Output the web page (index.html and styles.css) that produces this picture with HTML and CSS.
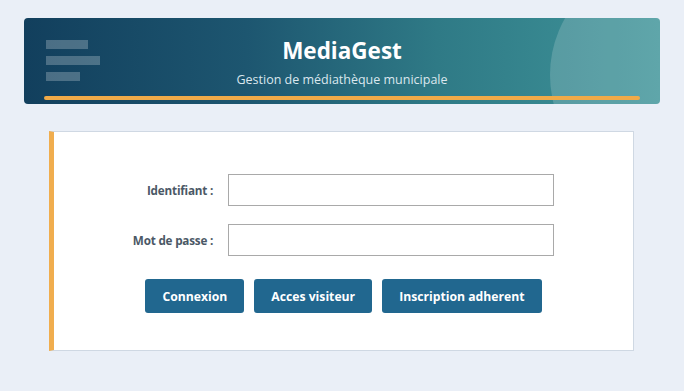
FILE: index.html
```html
<!DOCTYPE html>
<html lang="fr">
<head>
    <meta charset="UTF-8">
    <title>MediaGest - Connexion</title>
    <link rel="stylesheet" href="styles.css">
</head>
<body>
    <header class="banner">
        <div class="banner-bars">
            <span class="bar bar-1"></span>
            <span class="bar bar-2"></span>
            <span class="bar bar-3"></span>
        </div>
        <div class="banner-text">
            <h1>MediaGest</h1>
            <p>Gestion de médiathèque municipale</p>
        </div>
        <div class="banner-line"></div>
    </header>

    <main class="card">
        <form class="login-form">
            <div class="field-grid">
                <label for="login">Identifiant :</label>
                <input type="text" id="login">
                <label for="pass">Mot de passe :</label>
                <input type="password" id="pass">
            </div>
            <div class="actions">
                <button type="submit">Connexion</button>
                <button type="button">Acces visiteur</button>
                <button type="button">Inscription adherent</button>
            </div>
        </form>
    </main>
</body>
</html>
```

FILE: styles.css
```css
body {
    margin: 0;
    padding: 18px 24px 0;
    background-color: #eaeff7;
    font-family: "Open Sans", "Noto Sans", sans-serif;
}
.banner {
    position: relative;
    overflow: hidden;
    height: 86px;
    border-radius: 4px;
    background: linear-gradient(90deg, #123f5d 0%, #1d5670 35%, #2f7a86 65%, #3f9499 100%);
}
.banner::after {
    content: "";
    position: absolute;
    left: 526px;
    top: -58px;
    width: 230px;
    height: 230px;
    border-radius: 50%;
    background: rgba(255, 255, 255, 0.17);
}
.banner-bars {
    position: absolute;
    left: 22px;
    top: 22px;
    display: flex;
    flex-direction: column;
    gap: 7px;
}
.bar {
    display: block;
    height: 9px;
    background: rgba(255, 255, 255, 0.24);
}
.bar-1 { width: 42px; }
.bar-2 { width: 54px; }
.bar-3 { width: 34px; }
.banner-text {
    position: relative;
    z-index: 1;
    text-align: center;
    color: white;
    padding-top: 18px;
}
.banner-text h1 {
    margin: 0;
    font-size: 22.5px;
    line-height: 30px;
    font-weight: bold;
}
.banner-text p {
    margin: 5px 0 0;
    font-size: 12.5px;
    line-height: 18px;
    color: #dbe7ee;
}
.banner-line {
    position: absolute;
    left: 20px;
    right: 20px;
    bottom: 4px;
    height: 4px;
    border-radius: 2px;
    background: #f0aa48;
    z-index: 1;
}
.card {
    margin: 27px 26px 0 25px;
    background: white;
    border: 1px solid #cfd8e3;
    border-left: 5px solid #f0ad4e;
    padding: 42px 0 37px;
}
.login-form {
    display: flex;
    flex-direction: column;
    align-items: center;
    gap: 23px;
}
.field-grid {
    display: grid;
    grid-template-columns: auto 326px;
    column-gap: 15px;
    row-gap: 18px;
    align-items: center;
}
.field-grid label {
    text-align: right;
    font-size: 11.7px;
    letter-spacing: -0.2px;
    font-weight: bold;
    color: #4b5866;
}
.field-grid input {
    box-sizing: border-box;
    height: 32px;
    border: 1px solid #a9a9a9;
    border-radius: 0;
    padding: 4px 8px;
    font-size: 13px;
}
.actions {
    display: flex;
    gap: 10px;
}
.actions button {
    height: 34px;
    padding: 0 17px;
    border: none;
    border-radius: 3px;
    background-color: #21678f;
    color: white;
    font-family: inherit;
    font-size: 12.2px;
    font-weight: bold;
    cursor: pointer;
}
```
